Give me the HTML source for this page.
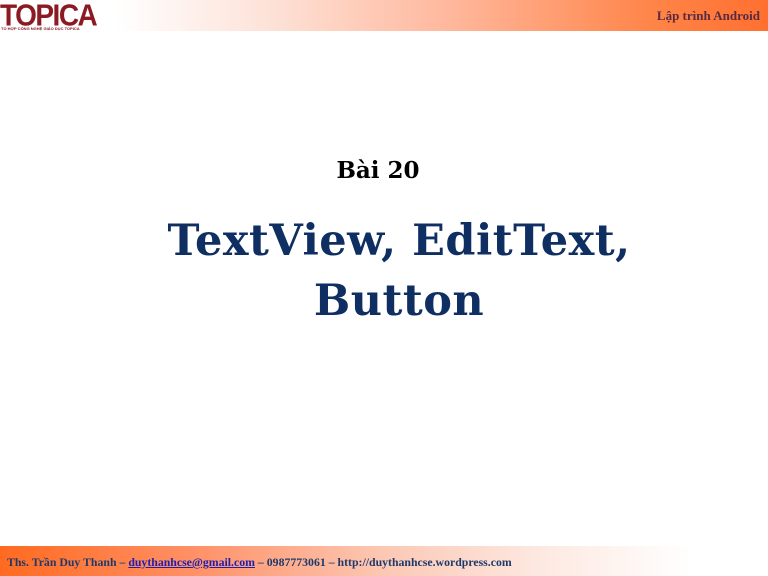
<!DOCTYPE html>
<html><head><meta charset="utf-8"><style>
body{margin:0;width:768px;height:576px;background:#fff;position:relative;overflow:hidden;font-family:"Liberation Serif",serif}
.hdr{position:absolute;left:0;top:0;width:768px;height:31px;background:linear-gradient(to right,#fff 0%,#fff 15%,#fde2d8 35%,#ffb598 60%,#ff8448 85%,#ff7030 100%)}
.logo{position:absolute;left:0;top:-2px;font:bold 28px "Liberation Sans",sans-serif;color:#8b1a22;letter-spacing:-1.5px;transform:scaleY(1.1);transform-origin:top left}
.sub{position:absolute;left:1px;top:26px;font:bold 4px "Liberation Sans",sans-serif;color:#8b1a22}
.ra{position:absolute;right:8px;top:8px;font:bold 13px "Liberation Serif",serif;color:#5a2a40}
.ftr{position:absolute;left:0;top:546px;width:768px;height:30px;background:linear-gradient(to right,#ff6a20 0%,#ff9066 25%,#fcc8b4 50%,#fde8e0 70%,#fff 90%)}
.ft{position:absolute;left:7px;top:555px;font:bold 11.8px "Liberation Serif",serif;color:#1f3a6a;white-space:nowrap}
.ft a{color:#2020b0;text-decoration:underline}
.t{position:absolute;width:768px;text-align:center;color:#0f2f63;font-family:"DejaVu Serif",serif;font-weight:bold}
</style></head><body>
<div class="hdr"></div>
<div class="logo">TOPICA</div>
<div class="sub">TỔ HỢP CÔNG NGHỆ GIÁO DỤC TOPICA</div>
<div class="ra">Lập trình Android</div>
<div class="t" style="top:157px;left:-6px;font-size:23px;color:#000">Bài 20</div>
<div class="t" style="top:211px;left:15px;font-size:43px;line-height:60px;letter-spacing:0.5px">TextView, EditText,<br>Button</div>
<div class="ftr"></div>
<div class="ft">Ths. Trần Duy Thanh – <a>duythanhcse@gmail.com</a> – 0987773061 – http://duythanhcse.wordpress.com</div>
</body></html>
